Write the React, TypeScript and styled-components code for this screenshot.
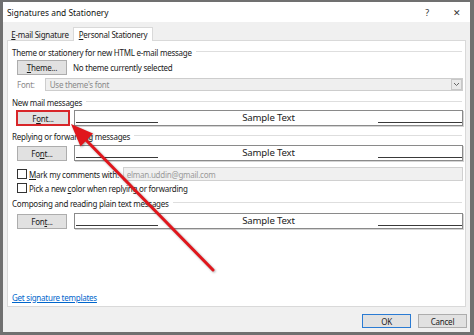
import React from "react";
import styled, { createGlobalStyle } from "styled-components";

const Global = createGlobalStyle`
  html, body { margin: 0; padding: 0; background: #ffffff; overflow: hidden; }
  body { font-family: "Noto Sans", "Open Sans", sans-serif; color: #1b1b1b; }
  * { box-sizing: border-box; }
`;

const Window = styled.div`
  position: relative;
  width: 474px;
  height: 335px;
  border-style: solid;
  border-color: #707070;
  border-width: 2px 4px 3px 3px;
  background: #f0f0f0;
  display: flex;
  flex-direction: column;
  font-size: 8px;
  letter-spacing: -0.25px;
`;

const TitleBar = styled.div`
  height: 20px;
  background: #ffffff;
  display: flex;
  align-items: center;
  padding-left: 4px;
`;

const Title = styled.div`
  flex: 1;
  font-size: 8.4px;
  letter-spacing: 0;
  color: #111;
`;

const TitleIcon = styled.div<{ $w: number }>`
  width: ${(p) => p.$w}px;
  text-align: center;
  font-size: 9px;
  color: #333;
`;

const TabStrip = styled.div`
  height: 18px;
  display: flex;
  align-items: flex-end;
  padding-left: 4px;
`;

const Tab = styled.div<{ $active?: boolean }>`
  display: flex;
  align-items: center;
  justify-content: center;
  font-size: 8px;
  ${(p) =>
    p.$active
      ? `width: 80px; height: 14px; margin-bottom: -1px; background: #fff; border: 1px solid #d9d9d9; border-bottom: none; position: relative; z-index: 1; padding-bottom: 1px;`
      : `width: 66px; height: 11px; padding-bottom: 0px;`}
`;

const Panel = styled.div`
  height: 267px;
  margin: 0 4px 0 4px;
  background: #ffffff;
  border: 1px solid #d9d9d9;
  display: flex;
  flex-direction: column;
  padding: 5px 2px 3px 4px;
`;

const SectionHeader = styled.div<{ $mt: number }>`
  margin-top: ${(p) => p.$mt}px;
  height: 12px;
  display: flex;
  align-items: center;
  gap: 4px;
  padding-right: 1px;
  white-space: nowrap;
  &::after {
    content: "";
    flex: 1;
    height: 1px;
    background: #dedede;
    margin-top: -1px;
  }
`;

const Row = styled.div<{ $mt: number; $h: number }>`
  margin-top: ${(p) => p.$mt}px;
  height: ${(p) => p.$h}px;
  padding-left: 5px;
  display: flex;
  align-items: center;
  white-space: nowrap;
`;

const FontRow = styled.div<{ $mt: number; $h: number }>`
  margin-top: ${(p) => p.$mt}px;
  height: ${(p) => p.$h}px;
  padding-left: 5px;
  display: grid;
  grid-template-columns: 57px 1fr;
  align-items: stretch;
`;

const Button = styled.div<{ $highlight?: boolean; $w?: number }>`
  width: ${(p) => (p.$highlight ? 54 : p.$w ?? 50)}px;
  height: ${(p) => (p.$highlight ? 16 : 15)}px;
  margin-left: ${(p) => (p.$highlight ? -1 : 0)}px;
  background: #e1e1e1;
  border: ${(p) => (p.$highlight ? "2px solid #d8262a" : "1px solid #adadad")};
  display: flex;
  align-items: center;
  justify-content: center;
  font-size: 8px;
  color: #1b1b1b;
  align-self: center;
`;

const U = styled.span`
  text-decoration: underline;
  text-underline-offset: 1px;
`;

const Muted = styled.span<{ $ml?: number }>`
  color: #8a8a8a;
  margin-left: ${(p) => p.$ml ?? 0}px;
`;

const Plain = styled.span<{ $ml?: number }>`
  margin-left: ${(p) => p.$ml ?? 0}px;
`;

const Select = styled.div`
  margin-left: 10px;
  flex: 1;
  height: 13px;
  background: #efefef;
  border: 1px solid #cdcdcd;
  display: flex;
  align-items: center;
  padding-left: 4px;
  color: #8a8a8a;
`;

const SelectText = styled.span`
  flex: 1;
`;

const DropButton = styled.div`
  width: 11px;
  height: 11px;
  border: 1px solid #c8c8c8;
  background: #e9e9e9;
  display: flex;
  align-items: center;
  justify-content: center;
`;

const SampleBox = styled.div`
  position: relative;
  border: 1px solid #8a8a8a;
  box-shadow: 1px 1px 0 #d4d4d4;
  display: flex;
  align-items: center;
  justify-content: center;
  font-size: 9.6px;
  color: #222;
  padding-bottom: 1px;
  letter-spacing: -0.15px;
  &::before,
  &::after {
    content: "";
    position: absolute;
    bottom: 2px;
    height: 1px;
    background: #3a3a3a;
  }
  &::before {
    left: 1px;
    width: 82px;
  }
  &::after {
    right: 0px;
    width: 84px;
  }
`;

const Checkbox = styled.div`
  width: 10px;
  height: 10px;
  border: 1px solid #333;
  background: #fff;
  margin-right: 2px;
`;

const DisabledInput = styled.div`
  margin-left: 4px;
  flex: 1;
  height: 14px;
  background: #f0f0f0;
  border: 1px solid #d0d0d0;
  display: flex;
  align-items: center;
  padding-left: 3px;
  color: #9a9a9a;
`;

const Spacer = styled.div`
  flex: 1;
`;

const Link = styled.a`
  height: 12px;
  display: flex;
  align-items: center;
  color: #0066cc;
  text-decoration: underline;
  text-underline-offset: 1px;
  font-size: 8px;
`;

const Footer = styled.div`
  flex: 1;
  display: flex;
  justify-content: flex-end;
  align-items: flex-start;
  gap: 7px;
  padding: 7px 3px 0 0;
`;

const DialogButton = styled.div<{ $default?: boolean }>`
  width: 49px;
  height: 14px;
  background: #e1e1e1;
  border: 1px solid ${(p) => (p.$default ? "#2a7bd3" : "#adadad")};
  display: flex;
  align-items: center;
  justify-content: center;
  font-size: 8px;
`;

const Overlay = styled.svg`
  position: absolute;
  left: -3px;
  top: -2px;
  width: 474px;
  height: 335px;
  pointer-events: none;
  z-index: 5;
  filter: drop-shadow(1px 1px 1px rgba(0, 0, 0, 0.35));
`;

function Chevron() {
  return (
    <svg width="7" height="5" viewBox="0 0 7 5">
      <path d="M1 1 L3.5 3.5 L6 1" fill="none" stroke="#666" strokeWidth="1" />
    </svg>
  );
}

export default function App() {
  return (
    <>
      <Global />
      <Window>
        <TitleBar>
          <Title>Signatures and Stationery</Title>
          <TitleIcon $w={34}>?</TitleIcon>
          <TitleIcon $w={26}>✕</TitleIcon>
        </TitleBar>
        <TabStrip>
          <Tab>
            <span>
              <U>E</U>-mail Signature
            </span>
          </Tab>
          <Tab $active>
            <span>
              <U>P</U>ersonal Stationery
            </span>
          </Tab>
        </TabStrip>
        <Panel>
          <SectionHeader $mt={0}>Theme or stationery for new HTML e-mail message</SectionHeader>
          <Row $mt={2} $h={15}>
            <Button>
              <span>
                <U>T</U>heme...
              </span>
            </Button>
            <Plain $ml={6}>No theme currently selected</Plain>
          </Row>
          <Row $mt={3} $h={13}>
            <Muted>Font:</Muted>
            <Select>
              <SelectText>Use theme's font</SelectText>
              <DropButton>
                <Chevron />
              </DropButton>
            </Select>
          </Row>
          <SectionHeader $mt={5}>New mail messages</SectionHeader>
          <FontRow $mt={2} $h={16}>
            <Button $highlight>
              <span>
                F<U>o</U>nt...
              </span>
            </Button>
            <SampleBox>Sample Text</SampleBox>
          </FontRow>
          <SectionHeader $mt={4}>Replying or forwarding messages</SectionHeader>
          <FontRow $mt={3} $h={15}>
            <Button>
              <span>
                Fo<U>n</U>t...
              </span>
            </Button>
            <SampleBox>Sample Text</SampleBox>
          </FontRow>
          <Row $mt={7} $h={14}>
            <Checkbox />
            <Plain>
              <U>M</U>ark my comments with:
            </Plain>
            <DisabledInput>elman.uddin@gmail.com</DisabledInput>
          </Row>
          <Row $mt={2} $h={10}>
            <Checkbox />
            <Plain>
              Pick a new <U>c</U>olor when replying or forwarding
            </Plain>
          </Row>
          <SectionHeader $mt={4}>Composing and reading plain text messages</SectionHeader>
          <FontRow $mt={4} $h={15}>
            <Button>
              <span>
                Fon<U>t</U>...
              </span>
            </Button>
            <SampleBox>Sample Text</SampleBox>
          </FontRow>
          <Spacer />
          <Link href="#">Get signature templates</Link>
        </Panel>
        <Footer>
          <DialogButton $default>OK</DialogButton>
          <DialogButton>Cancel</DialogButton>
        </Footer>
        <Overlay viewBox="0 0 474 335">
          <line x1="213" y1="270" x2="84" y2="138" stroke="#e0161c" strokeWidth="3" strokeLinecap="round" />
          <polygon points="71,124 93,133.5 80.5,146.5" fill="#e0161c" />
        </Overlay>
      </Window>
    </>
  );
}
